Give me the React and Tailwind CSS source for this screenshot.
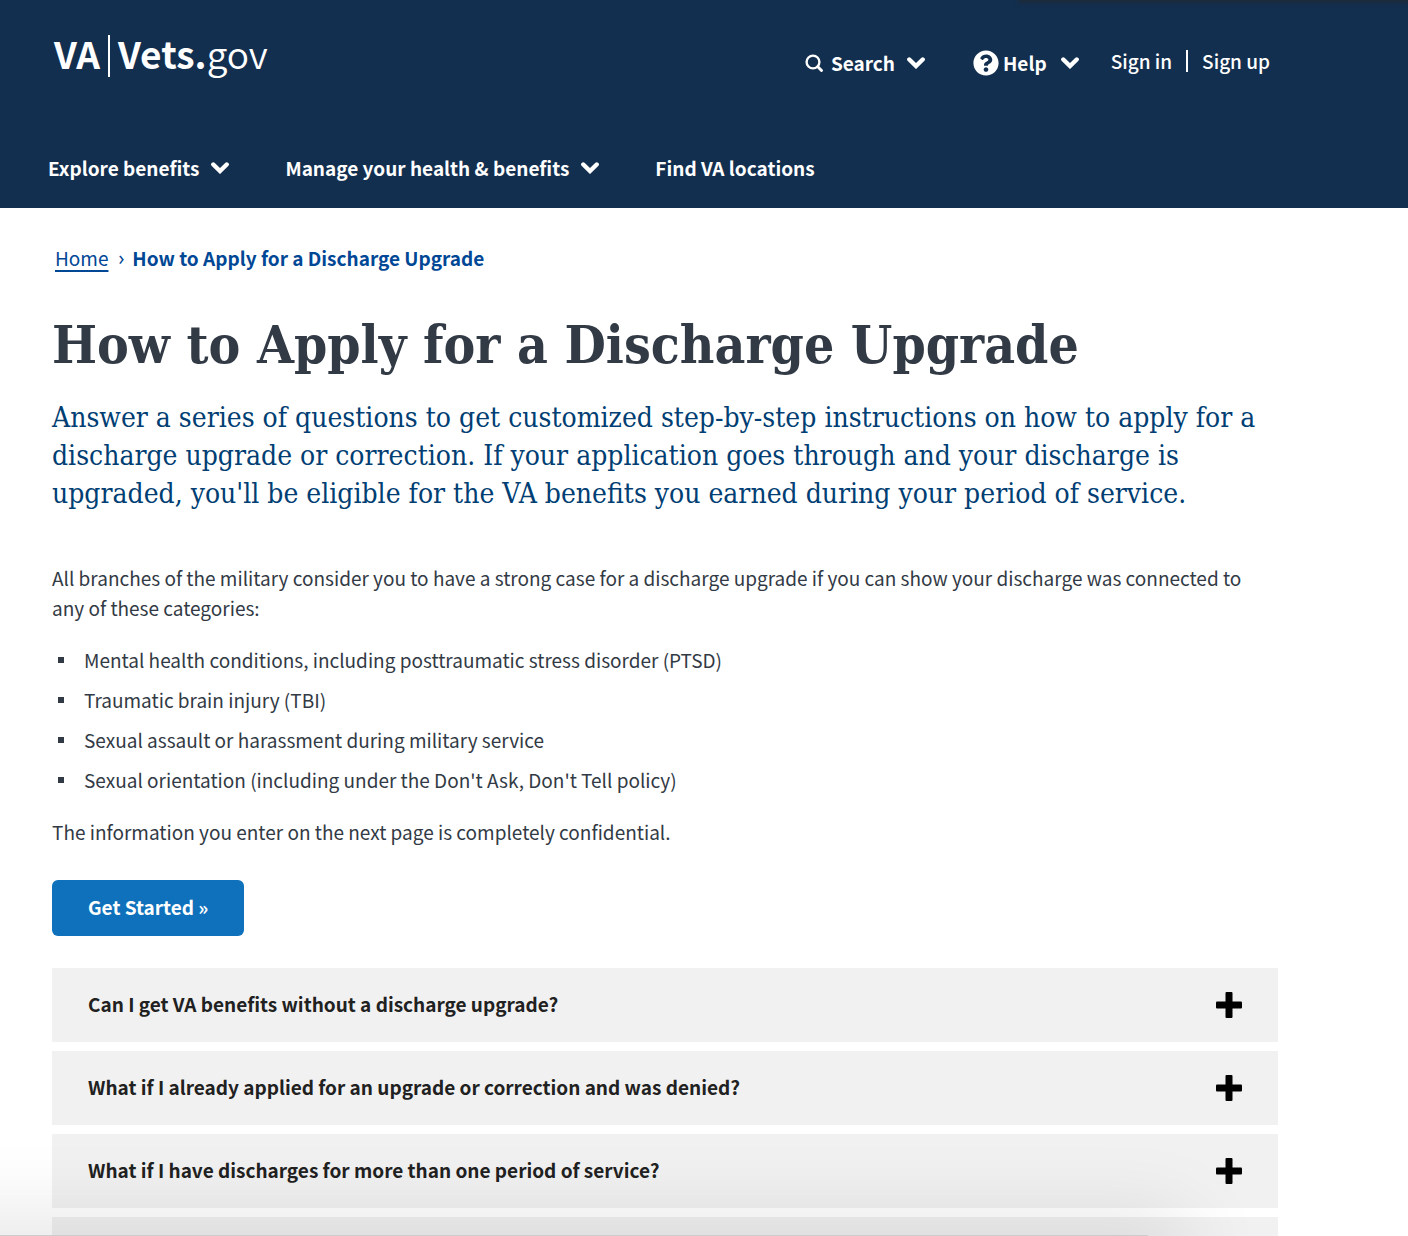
import React from "react";
import { FaQuestionCircle } from "react-icons/fa";

const topics = [
  "Can I get VA benefits without a discharge upgrade?",
  "What if I already applied for an upgrade or correction and was denied?",
  "What if I have discharges for more than one period of service?",
];

const categories = [
  "Mental health conditions, including posttraumatic stress disorder (PTSD)",
  "Traumatic brain injury (TBI)",
  "Sexual assault or harassment during military service",
  "Sexual orientation (including under the Don't Ask, Don't Tell policy)",
];

function Chevron() {
  return (
    <svg viewBox="0 0 18 12" className="h-3 w-[18px] shrink-0" fill="none" aria-hidden="true">
      <path d="M2.300 2.500 9 9l6.700-6.500" stroke="currentColor" strokeWidth="4.400" strokeLinecap="round" strokeLinejoin="miter" />
    </svg>
  );
}

function SearchIcon() {
  return (
    <svg viewBox="0 0 18 18" className="size-[18px] shrink-0" fill="none" stroke="currentColor" strokeLinecap="round" aria-hidden="true">
      <circle cx="8" cy="8" r="6.400" strokeWidth="2.400" />
      <path d="m12.800 12.800 3.700 3.700" strokeWidth="2.900" />
    </svg>
  );
}

function Plus() {
  return (
    <svg viewBox="0 0 26 26" className="size-[26px] shrink-0" fill="#000" aria-hidden="true">
      <rect x="9.500" width="7" height="26" rx="1" />
      <rect y="9.500" width="26" height="7" rx="1" />
    </svg>
  );
}

export default function App() {
  return (
    <div className="min-h-screen overflow-hidden bg-white font-['Noto_Sans_CJK_SC','Noto_Sans',sans-serif] text-[19px] leading-[30px] text-[#323a45]">
      <div className="pointer-events-none fixed top-0 right-0 h-px w-[388px] bg-[#1d2a3a] shadow-[0_0_4px_2px_#1d2a3a]" />
      <header className="flex h-52 flex-col justify-between bg-[#132f4f] pt-[30px] pr-[138px] pb-[25px] pl-12 text-white">
        <div className="flex items-start justify-between">
          <a href="#" className="flex items-center pl-1.5 text-[37px] leading-[46px] font-bold">
            <span className="pb-1.5">VA</span>
            <span className="mx-2 h-[42px] w-0.5 bg-white" />
            <span className="pb-1.5">
              Vets.<span className="font-[350]">gov</span>
            </span>
          </a>
          <div className="flex items-center pt-4">
            <button className="flex items-center font-bold">
              <SearchIcon />
              <span className="mr-3 ml-2">Search</span>
              <Chevron />
            </button>
            <button className="ml-12 flex items-center font-bold">
              <FaQuestionCircle className="size-[26px]" />
              <span className="mr-3.5 ml-1">Help</span>
              <Chevron />
            </button>
            <div className="ml-8 flex items-center pb-1 font-medium">
              <a href="#">Sign in</a>
              <span className="mx-3.5 h-[22px] w-0.5 bg-white" />
              <a href="#">Sign up</a>
            </div>
          </div>
        </div>
        <nav className="flex items-center gap-14 font-bold">
          <button className="flex items-center gap-3">Explore benefits <Chevron /></button>
          <button className="flex items-center gap-3">Manage your health &amp; benefits <Chevron /></button>
          <a href="#">Find VA locations</a>
        </nav>
      </header>

      <main className="pr-[130px] pl-13">
        <nav className="flex items-center pt-[35px] pl-[3px] text-[#004795]">
          <a href="#" className="underline decoration-2 underline-offset-4">Home</a>
          <span className="mr-2 ml-2.5 font-['Noto_Sans']">›</span>
          <span className="font-bold">How to Apply for a Discharge Upgrade</span>
        </nav>
        <h1 className="mt-8 font-['DejaVu_Serif_Condensed','DejaVu_Serif',serif] text-[53px] leading-[78px] font-bold">
          How to Apply for a Discharge Upgrade
        </h1>
        <p className="mt-4 font-['DejaVu_Serif_Condensed','DejaVu_Serif',serif] text-[28px] leading-[38px] text-[#003e73]">
          Answer a series of questions to get customized step-by-step instructions on how to apply for a discharge upgrade or correction. If your application goes through and your discharge is upgraded, you'll be eligible for the VA benefits you earned during your period of service.
        </p>
        <p className="mt-[50px] pr-4">
          All branches of the military consider you to have a strong case for a discharge upgrade if you can show your discharge was connected to any of these categories:
        </p>
        <ul className="mt-[22px] flex flex-col gap-2.5">
          {categories.map((c) => (
            <li key={c} className="flex items-center pl-1.5">
              <span className="mr-5 size-1.5 bg-[#323a45]" />
              {c}
            </li>
          ))}
        </ul>
        <p className="mt-[22px]">The information you enter on the next page is completely confidential.</p>
        <button className="mt-[33px] flex h-14 items-center rounded-md bg-[#0f71bb] px-9 pb-0.5 font-bold text-white">
          Get Started »
        </button>
        <div className="mt-8 flex flex-col gap-[9px] font-bold text-[#212121]">
          {topics.map((t) => (
            <button key={t} className="flex h-[74px] items-center justify-between bg-[#f1f1f1] px-9 text-left">
              <span className="pb-0.5">{t}</span>
              <Plus />
            </button>
          ))}
          <div className="h-[19px] bg-[#f1f1f1]" />
        </div>
      </main>
      <div className="pointer-events-none fixed bottom-0 -left-24 h-px w-[1244px] bg-[#ccc] shadow-[0_20px_80px_40px_rgba(0,0,0,0.1)]" />
    </div>
  );
}
